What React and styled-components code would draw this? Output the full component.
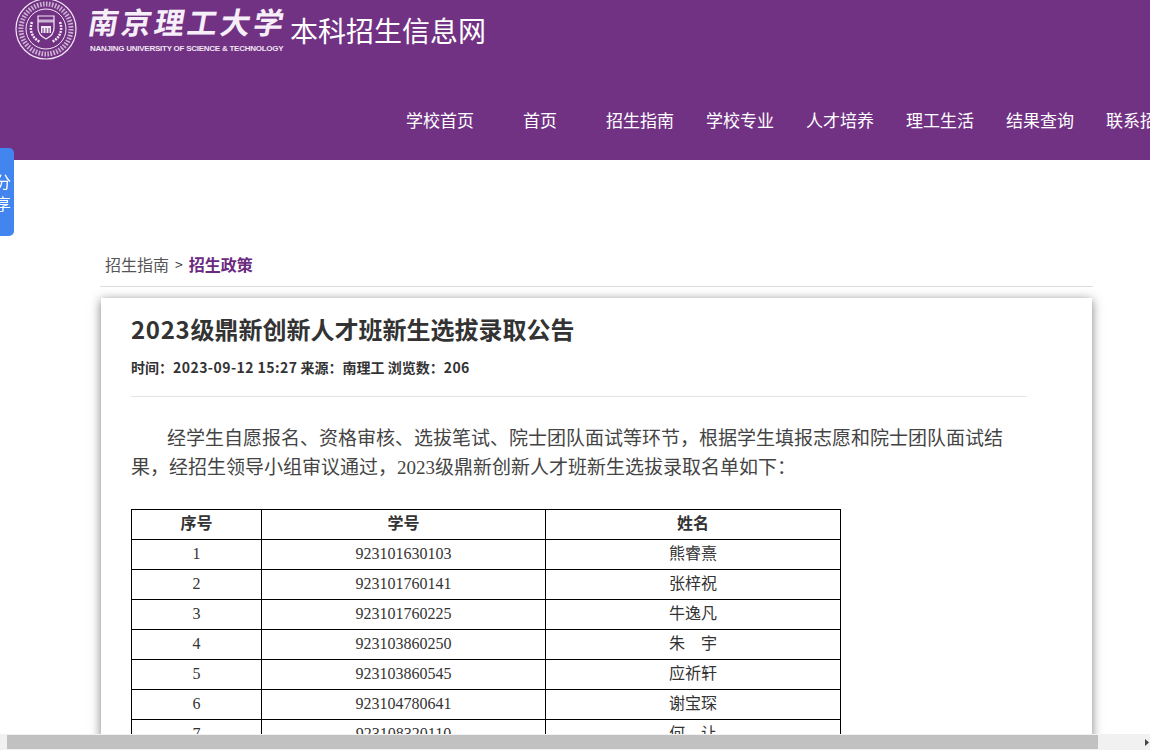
import React from 'react'
import styled, { createGlobalStyle } from 'styled-components'

const sans = `"Noto Sans CJK SC", "Open Sans", sans-serif`

const GlobalStyle = createGlobalStyle`
    html, body {
        margin: 0;
        padding: 0;
        height: 750px;
        overflow: hidden;
        background: #fff;
        font-family: ${sans};
    }
`

const Header = styled.header`
    height: 160px;
    background: #723284;
    overflow: hidden;
    display: flex;
    flex-direction: column;
    justify-content: space-between;
    padding-bottom: 20px;
    box-sizing: border-box;
`

const Brand = styled.div`
    display: flex;
    align-items: flex-start;
    padding-left: 15px;
    color: #fff;
`

const LogoName = styled.div`
    margin-left: 12px;
    width: 196px;
`

const Calligraphy = styled.div`
    font-size: 30px;
    line-height: 42px;
    font-weight: 700;
    letter-spacing: 3px;
    white-space: nowrap;
    transform: skewX(-10deg);
    color: #f6eef8;
`

const LogoEnglish = styled.div`
    font-family: "Liberation Sans", Arial, sans-serif;
    font-size: 8px;
    line-height: 12px;
    margin: 1px 0 0 1px;
    font-weight: 700;
    letter-spacing: -0.25px;
    white-space: nowrap;
    color: #efe4f2;
`

const SiteName = styled.div`
    margin: 9px 0 0 5px;
    font-size: 28px;
    line-height: 42px;
    white-space: nowrap;
`

const Nav = styled.nav`
    display: flex;
    padding-left: 390px;
`

const NavItem = styled.a`
    flex: 0 0 100px;
    font-size: 17px;
    line-height: 40px;
    text-align: center;
    white-space: nowrap;
    color: #fff;
`

const ShareTab = styled.div`
    position: fixed;
    left: 0;
    top: 148px;
    width: 14px;
    height: 88px;
    background: #4285ee;
    border-radius: 0 5px 5px 0;
    color: #fff;
    font-size: 16px;
    line-height: 22px;
    overflow: hidden;
    display: flex;
    flex-direction: column;
    justify-content: center;
    text-indent: -5px;
`

const Main = styled.main`
    width: 993px;
    margin-left: 100px;
    padding-top: 90px;
`

const Crumbs = styled.div`
    display: flex;
    align-items: center;
    gap: 6px;
    height: 37px;
    box-sizing: border-box;
    padding: 0 0 8px 5px;
    border-bottom: 1px solid #ddd;
    font-size: 16px;
    color: #555;
`

const CrumbArrow = styled.span`
    font-size: 14px;
    color: #333;
`

const CrumbCurrent = styled.b`
    color: #6b2a80;
`

const Card = styled.article`
    margin: 11px 1px 0;
    padding: 13px 65px 0 30px;
    background: #fff;
    box-shadow: 0 2px 10px rgba(0, 0, 0, 0.5);
    height: 440px;
    overflow: hidden;
`

const Title = styled.h1`
    margin: 0;
    font-size: 24px;
    line-height: 36px;
    font-weight: 700;
    color: #333;
`

const Digits = styled.span`
    letter-spacing: ${({ $spacing }) => $spacing};
`

const Meta = styled.div`
    margin-top: 9px;
    padding-bottom: 18px;
    border-bottom: 1px solid #e2e2e2;
    font-size: 14px;
    line-height: 22px;
    font-weight: 700;
    color: #333;
`

const Paragraph = styled.p`
    margin: 25px 0 27px;
    font-size: 19px;
    line-height: 29px;
    text-indent: 36px;
    color: #444;
`

const SerifRun = styled.span`
    font-family: "Liberation Serif", serif;
`

const Table = styled.table`
    width: 709px;
    border-collapse: collapse;
    table-layout: fixed;
    font-size: 16px;
    color: #333;
`

const HeadCell = styled.th`
    height: 23px;
    padding: 0 0 6px;
    border: 1px solid #000;
    font-weight: 700;
    text-align: center;
    line-height: 20px;
`

const Cell = styled.td`
    height: ${({ $serif }) => ($serif ? 27 : 23)}px;
    padding: 0 0 ${({ $serif }) => ($serif ? 2 : 6)}px;
    border: 1px solid #000;
    text-align: center;
    line-height: 20px;
    font-family: ${({ $serif }) => ($serif ? `"Liberation Serif", serif` : sans)};
`

const ScrollBar = styled.div`
    position: fixed;
    left: 0;
    right: 0;
    bottom: 0;
    height: 16px;
    background: #f1f1f1;
    display: flex;
    align-items: center;
`

const ScrollThumb = styled.div`
    margin-left: 7px;
    width: 1091px;
    height: 14px;
    background: #c1c1c1;
`

const ScrollArrow = styled.svg`
    position: absolute;
    right: 0;
    top: 5px;
`

const navItems = ['学校首页', '首页', '招生指南', '学校专业', '人才培养', '理工生活', '结果查询', '联系招生']

const students = [
    ['1', '923101630103', '熊睿熹'],
    ['2', '923101760141', '张梓祝'],
    ['3', '923101760225', '牛逸凡'],
    ['4', '923103860250', '朱\u3000宇'],
    ['5', '923103860545', '应祈轩'],
    ['6', '923104780641', '谢宝琛'],
    ['7', '923108320110', '何\u3000让'],
]

function Emblem() {
    return (
        <svg width="62" height="60" viewBox="0 0 62 60" fill="none" stroke="#f3e8f5">
            <circle cx="31" cy="29" r="30" strokeWidth="1.2" />
            <circle cx="31" cy="29" r="20" strokeWidth="1" />
            <circle cx="31" cy="29" r="25" strokeWidth="5" strokeDasharray="1.6 1.4" opacity="0.7" />
            <path d="M17 22c-3 8 0 16 8 20M45 22c3 8 0 16-8 20" strokeWidth="2.5" strokeDasharray="2 1" />
            <path d="M23 16h16v12c0 6-4 9-8 11-4-2-8-5-8-11z" strokeWidth="1.2" />
            <path d="M23 21h16" strokeWidth="3" opacity="0.7" />
            <rect x="26" y="26" width="10" height="7" fill="#f3e8f5" stroke="none" />
            <path d="M28 28v5M31 28v5M34 28v5" stroke="#723284" strokeWidth="1" />
        </svg>
    )
}

export default function App() {
    return (
        <>
            <GlobalStyle />
            <Header>
                <Brand>
                    <Emblem />
                    <LogoName>
                        <Calligraphy>南京理工大学</Calligraphy>
                        <LogoEnglish>NANJING UNIVERSITY OF SCIENCE &amp; TECHNOLOGY</LogoEnglish>
                    </LogoName>
                    <SiteName>本科招生信息网</SiteName>
                </Brand>
                <Nav>
                    {navItems.map((item) => (
                        <NavItem key={item}>{item}</NavItem>
                    ))}
                </Nav>
            </Header>
            <ShareTab>
                <span>分</span>
                <span>享</span>
            </ShareTab>
            <Main>
                <Crumbs>
                    <span>招生指南</span>
                    <CrumbArrow>&gt;</CrumbArrow>
                    <CrumbCurrent>招生政策</CrumbCurrent>
                </Crumbs>
                <Card>
                    <Title>
                        <Digits $spacing="0.7px">2023</Digits>级鼎新创新人才班新生选拔录取公告
                    </Title>
                    <Meta>
                        时间：<Digits $spacing="0.45px">2023-09-12 15:27</Digits> 来源：南理工 浏览数：<Digits $spacing="0.4px">206</Digits>
                    </Meta>
                    <Paragraph>
                        经学生自愿报名、资格审核、选拔笔试、院士团队面试等环节，根据学生填报志愿和院士团队面试结果，经招生领导小组审议通过，
                        <SerifRun>2023</SerifRun>级鼎新创新人才班新生选拔录取名单如下：
                    </Paragraph>
                    <Table>
                        <colgroup>
                            <col width="130" />
                            <col width="284" />
                            <col width="295" />
                        </colgroup>
                        <thead>
                            <tr>
                                <HeadCell>序号</HeadCell>
                                <HeadCell>学号</HeadCell>
                                <HeadCell>姓名</HeadCell>
                            </tr>
                        </thead>
                        <tbody>
                            {students.map(([no, id, name]) => (
                                <tr key={no}>
                                    <Cell $serif>{no}</Cell>
                                    <Cell $serif>{id}</Cell>
                                    <Cell>{name}</Cell>
                                </tr>
                            ))}
                        </tbody>
                    </Table>
                </Card>
            </Main>
            <ScrollBar>
                <ScrollThumb />
                <ScrollArrow width="5" height="7" viewBox="0 0 5 7">
                    <path d="M0 0l4 3.5L0 7z" fill="#444" />
                </ScrollArrow>
            </ScrollBar>
        </>
    )
}
